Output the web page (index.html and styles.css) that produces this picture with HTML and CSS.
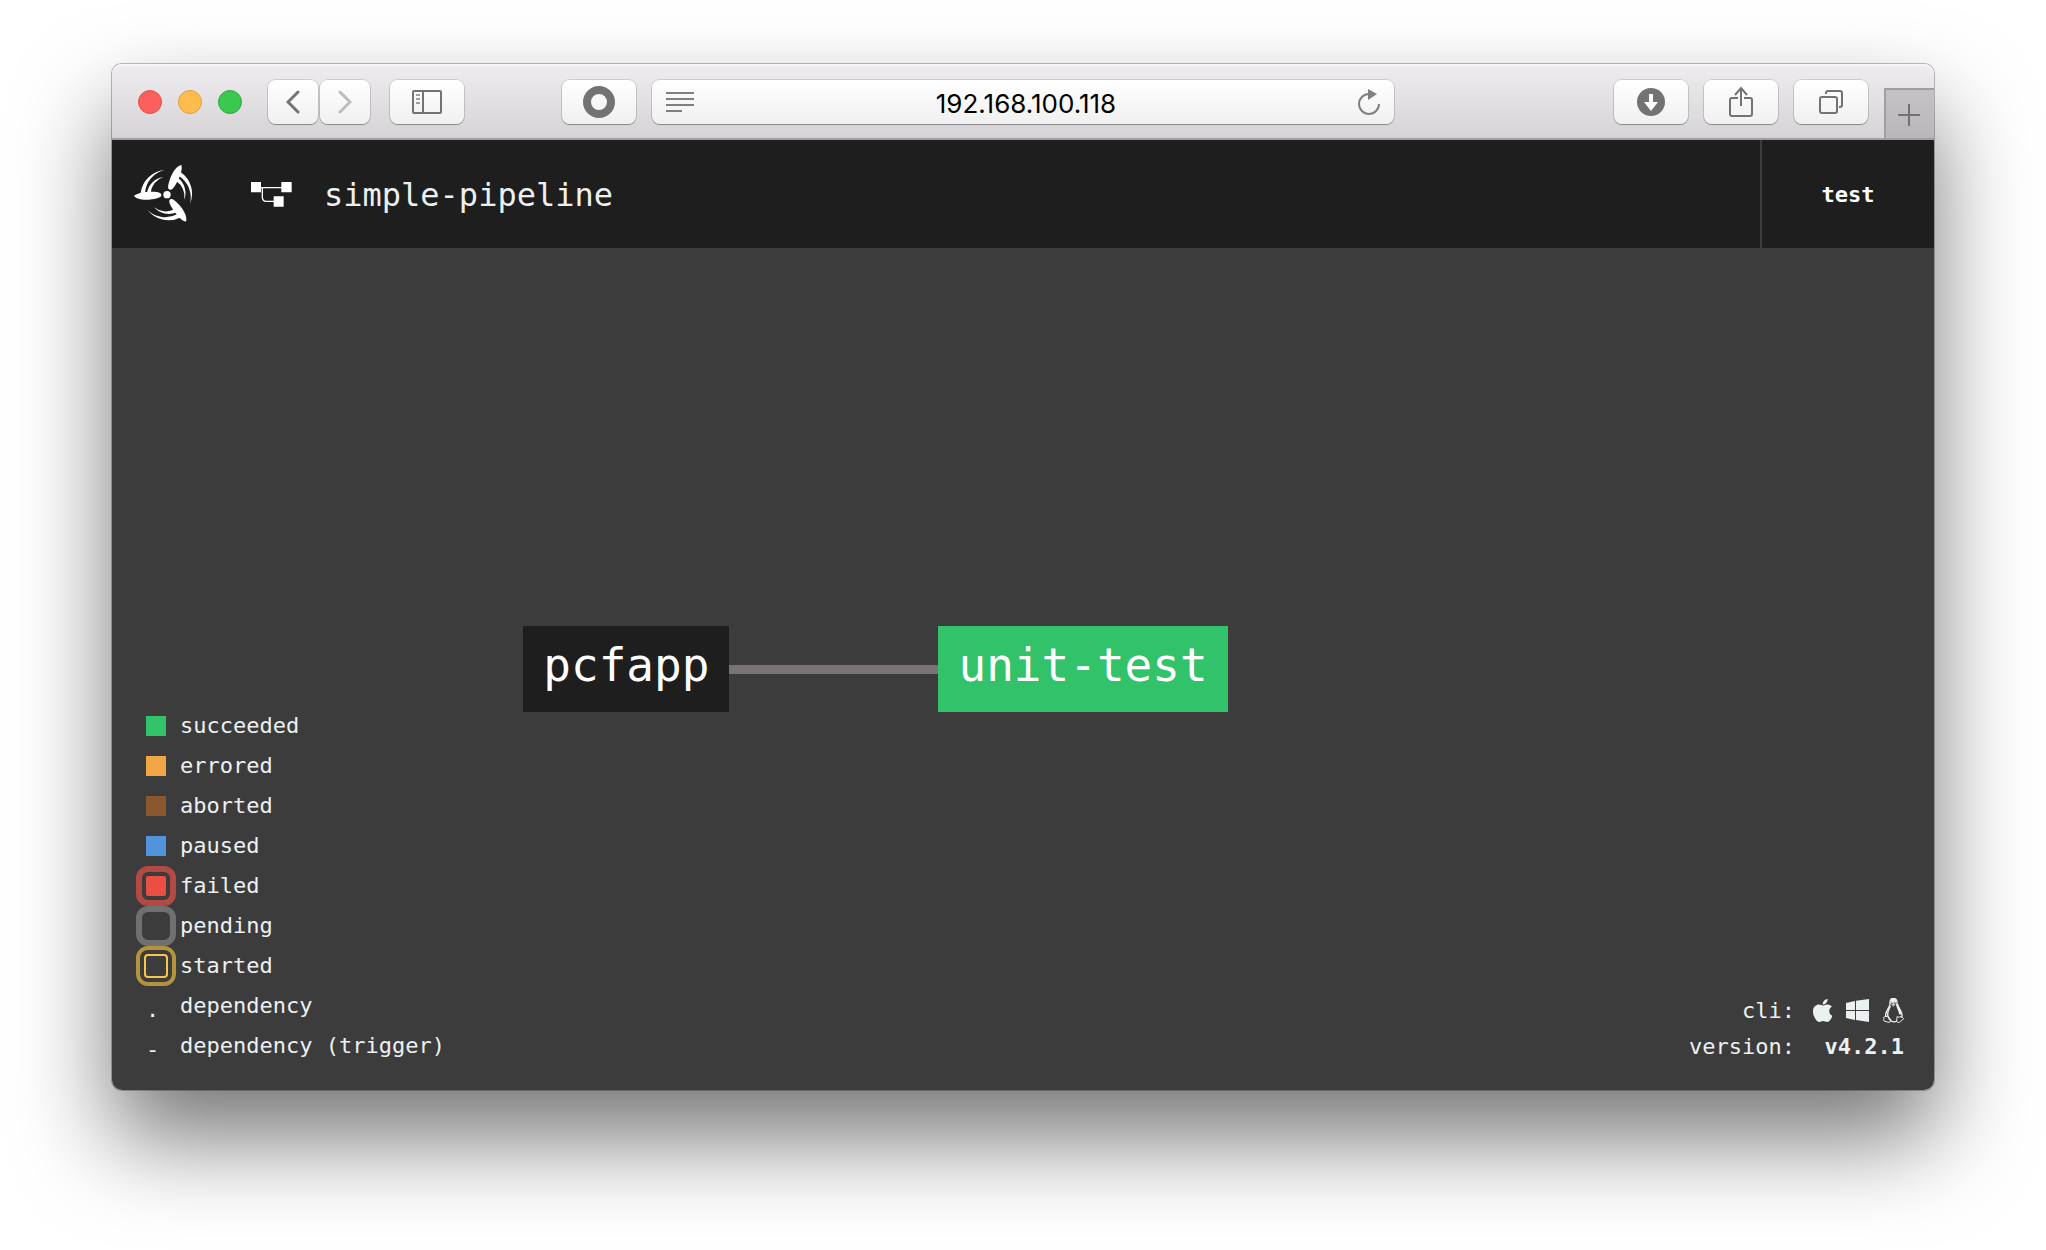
FILE: index.html
```html
<!DOCTYPE html>
<html lang="en">
<head>
<meta charset="utf-8">
<title>simple-pipeline</title>
<link rel="stylesheet" href="styles.css">
</head>
<body>
<div class="window">
  <div class="toolbar">
    <div class="toolbar-side">
      <div class="lights">
        <button class="light light-close" aria-label="Close"></button>
        <button class="light light-minimize" aria-label="Minimize"></button>
        <button class="light light-zoom" aria-label="Zoom"></button>
      </div>
      <div class="history">
        <button class="tool tool-small" aria-label="Back"><svg width="14" height="24" viewBox="0 0 14 24"><path d="M12 2 2 12l10 10" fill="none" stroke="#737373" stroke-width="3" stroke-linecap="round"/></svg></button>
        <button class="tool tool-small" aria-label="Forward"><svg width="14" height="24" viewBox="0 0 14 24"><path d="M2 2l10 10L2 22" fill="none" stroke="#bdbdbd" stroke-width="3" stroke-linecap="round"/></svg></button>
      </div>
      <button class="tool" aria-label="Show sidebar"><svg width="30" height="24" viewBox="0 0 30 24"><g fill="none" stroke="#737373" stroke-width="2"><rect x="1" y="1" width="28" height="22" rx="1"/><path d="M11 1v22"/><path d="M4 5h4M4 9h4M4 13h4" stroke="#a0a0a0"/></g></svg></button>
      <button class="tool tool-end" aria-label="Extension"><svg width="32" height="32" viewBox="0 0 32 32"><circle cx="16" cy="16" r="12" fill="none" stroke="#737373" stroke-width="8"/></svg></button>
    </div>
    <div class="address">
      <svg width="28" height="20" viewBox="0 0 28 20"><path d="M0 1h28M0 7h28M0 13h28M0 19h16" stroke="#808080" stroke-width="2"/></svg>
      <input class="address-input" type="text" aria-label="Address" value="192.168.100.118">
      <button class="reload" aria-label="Reload"><svg width="22" height="26" viewBox="0 0 22 26"><path d="M11 5a10 10 0 1 0 10 10" fill="none" stroke="#808080" stroke-width="2"/><path d="M10 0v11l9-6z" fill="#808080"/></svg></button>
    </div>
    <div class="toolbar-side toolbar-right">
      <button class="tool" aria-label="Downloads"><svg width="28" height="28" viewBox="0 0 28 28"><circle cx="14" cy="14" r="14" fill="#737373"/><path d="M12 6h4v8h5l-7 9-7-9h5z" fill="#fff"/></svg></button>
      <button class="tool" aria-label="Share"><svg width="24" height="32" viewBox="0 0 24 32"><path d="M9 12H3q-2 0-2 2v14q0 2 2 2h18q2 0 2-2V14q0-2-2-2h-6M12 20V3M6 9l6-7 6 7" fill="none" stroke="#737373" stroke-width="2"/></svg></button>
      <button class="tool" aria-label="Show all tabs"><svg width="24" height="24" viewBox="0 0 24 24"><g fill="none" stroke="#737373" stroke-width="2"><rect x="1" y="7" width="17" height="16" rx="2"/><path d="M7 4V3q0-2 2-2h12q2 0 2 2v12q0 2-2 2h-1"/></g></svg></button>
      <button class="new-tab" aria-label="New tab"><svg width="22" height="22" viewBox="0 0 22 22"><path d="M11 0v22M0 11h22" stroke="#737176" stroke-width="2"/></svg></button>
    </div>
  </div>

  <header class="header">
    <a class="logo" href="#" aria-label="Home">
      <svg width="60" height="60" viewBox="42 42 180 180" fill="#fff">
        <defs>
          <g id="blade">
            <path d="M42 138C50 129 72 125 96 125 118 125 124 129 124 135S116 145 96 148C72 152 50 148 42 138z"/>
            <path d="M62 129A79 79 0 0 1 134 60 76 76 0 0 0 75 129z"/>
            <path d="M81 129A58 58 0 0 1 130 81 56 56 0 0 0 92 129z"/>
          </g>
        </defs>
        <circle cx="141" cy="134" r="11"/>
        <use href="#blade"/>
        <use href="#blade" transform="rotate(118 141 134)"/>
        <use href="#blade" transform="rotate(237 141 134)"/>
      </svg>
    </a>
    <a class="pipeline" href="#">
      <svg width="41" height="25" viewBox="393 103 123 75"><path d="M393 103h30v31h-30zM484 103h31v31h-31zM461 146h30v31h-30z" fill="#fff"/><path d="M420 120h66M427 120v28q0 13 12 13h24" fill="none" stroke="#fff" stroke-width="4"/></svg>
      <span>simple-pipeline</span>
    </a>
    <a class="team" href="#">test</a>
  </header>

  <main class="canvas">
    <div class="graph">
      <a class="node" href="#">pcfapp</a>
      <span class="edge"></span>
      <a class="node node-succeeded" href="#">unit-test</a>
    </div>

    <ul class="legend">
      <li><span class="key"><i class="swatch succeeded"></i></span>succeeded</li>
      <li><span class="key"><i class="swatch errored"></i></span>errored</li>
      <li><span class="key"><i class="swatch aborted"></i></span>aborted</li>
      <li><span class="key"><i class="swatch paused"></i></span>paused</li>
      <li><span class="key ring ring-failed"><i class="swatch failed"></i></span>failed</li>
      <li><span class="key ring ring-pending"></span>pending</li>
      <li><span class="key ring ring-started"><i class="swatch started"></i></span>started</li>
      <li><span class="key mark">.</span>dependency</li>
      <li><span class="key mark">-</span>dependency (trigger)</li>
    </ul>

    <dl class="info">
      <dt>cli:</dt>
      <dd class="downloads">
        <a href="#" aria-label="macOS"><svg width="19" height="23" viewBox="4 32 367 448" preserveAspectRatio="none"><path fill="#ecf0f1" d="M318.700 268.700c-.2-36.700 16.400-64.400 50-84.800-18.800-26.900-47.200-41.700-84.700-44.600-35.500-2.800-74.300 20.700-88.500 20.700-15 0-49.400-19.700-76.400-19.700C63.300 141.200 4 184.800 4 273.500q0 39.300 14.400 81.200c12.800 36.700 59 126.700 107.200 125.200 25.200-.6 43-17.900 75.800-17.900 31.800 0 48.300 17.900 76.400 17.900 48.600-.7 90.400-82.500 102.600-119.300-65.200-30.700-61.700-90-61.700-91.900zm-56.600-164.200c27.300-32.400 24.800-61.900 24-72.500-24.100 1.400-52 16.400-67.900 34.900-17.500 19.800-27.800 44.300-25.600 71.900 26.100 2 49.900-11.400 69.500-34.300z"/></svg></a>
        <a href="#" aria-label="Windows"><svg width="23" height="23" viewBox="0 0 23 23"><path fill="#ecf0f1" d="M0 4l9-2v9H0zM10 1.800L23 0v11H10zM0 12h9v9l-9-2zM10 12h13v11l-13-2z"/></svg></a>
        <a href="#" aria-label="Linux"><svg width="21" height="25" viewBox="0 0 63 75" fill="none" stroke="#ecf0f1" stroke-width="4">
          <path d="M21 18C20 7 24 1 31 1s11 6 11 15c0 8 13 20 15 33 1 5-1 8-4 9M21 18c0 8-11 19-13 31-1 4 0 6 3 8"/>
          <path d="M42 18c1 10 9 18 10 31" stroke-width="7"/>
          <path d="M22 24c-3 9-7 12-8 23 0 8 3 16 10 22q9 5 18 0"/>
          <path d="M22 8q2-7 9-7t9 7l-3 9-7-3-7 3zM24 20l7-4 7 4-7 6z" fill="#ecf0f1" stroke="none"/>
          <path d="M26 11l1 3M35 11v3M25 20l6 3 6-3" stroke="#3d3c3c" stroke-width="2"/>
          <path d="M11 54c-3 2-7 1-9 4 1 4-1 8 1 11 6 1 10 4 15 4 5-1 7-5 5-9-4-4-7-10-12-10zM43 55c-2 5-2 10-2 15 3 5 9 4 12 0 3-3 7-4 9-8-4-2-4-6-7-8-3 4-9 5-12 1z" stroke-width="3"/>
        </svg></a>
      </dd>
      <dt>version:</dt>
      <dd class="version">v4.2.1</dd>
    </dl>
  </main>
</div>
</body>
</html>
```
FILE: styles.css
```css
* {
  box-sizing: border-box;
}

body {
  margin: 0;
  min-height: 100vh;
  padding: 64px 112px 160px;
  display: flex;
  background: #fff;
  color: #ecf0f1;
  font-family: "DejaVu Sans Mono", "Liberation Mono", monospace;
  font-size: 22px;
}

a {
  color: inherit;
  text-decoration: none;
}

svg {
  display: block;
}

button {
  padding: 0;
  border: 0;
  background: none;
}

.window {
  flex: 1;
  display: flex;
  flex-direction: column;
  border-radius: 10px;
  box-shadow: 0 0 0 1px rgba(0, 0, 0, 0.25), 0 48px 94px rgba(0, 0, 0, 0.54);
}

/* Browser toolbar */

.toolbar {
  display: grid;
  grid-template-columns: 1fr minmax(200px, 742px) 1fr;
  height: 76px;
  padding-top: 16px;
  border-bottom: 2px solid #a09ea1;
  border-radius: 10px 10px 0 0;
  background: linear-gradient(#efedf0, #d5d3d6);
  box-shadow: inset 0 2px 0 #f6f5f7;
}

.toolbar-side {
  display: flex;
  align-items: flex-start;
  padding: 0 16px 0 26px;
}

.toolbar-right {
  justify-content: flex-end;
  gap: 16px;
  padding: 0;
}

.lights {
  display: flex;
  gap: 16px;
  margin: 10px 26px 0 0;
}

.light {
  width: 24px;
  height: 24px;
  border: 1px solid #e0504d;
  border-radius: 50%;
  background: #fc605c;
}

.light-minimize {
  border-color: #dfa03c;
  background: #fdbc4e;
}

.light-zoom {
  border-color: #2eab3c;
  background: #3bc84e;
}

.history {
  display: flex;
  gap: 2px;
  margin-right: 20px;
}

.tool,
.address {
  height: 44px;
  border-radius: 8px;
  background: linear-gradient(#fff, #f0f0f0);
  box-shadow: 0 0 0 1px rgba(0, 0, 0, 0.12), 0 1px 1px rgba(0, 0, 0, 0.3);
}

.tool {
  display: flex;
  align-items: center;
  justify-content: center;
  width: 74px;
}

.tool-small {
  width: 50px;
}

.tool-end {
  margin-left: auto;
}

.address {
  display: flex;
  align-items: center;
  gap: 8px;
  padding: 0 14px;
}

.address-input {
  flex: 1;
  min-width: 0;
  padding: 4px 0 0;
  border: 0;
  background: none;
  color: #000;
  font: 26px/32px Inter, sans-serif;
  text-align: center;
}

.new-tab {
  display: flex;
  align-items: center;
  justify-content: center;
  width: 50px;
  height: 50px;
  margin-top: 8px;
  padding: 2px 2px 0 0;
  border-top: 2px solid #a09ea1;
  border-left: 2px solid #a09ea1;
  background: linear-gradient(#c4c2c5, #b9b7ba);
}

/* Page header */

.header {
  display: flex;
  align-items: stretch;
  height: 108px;
  background: #1e1e1e;
}

.logo {
  display: flex;
  align-items: center;
  padding: 0 57px 0 22px;
}

.pipeline {
  display: flex;
  align-items: center;
  gap: 32px;
  padding-top: 1px;
  font-size: 32px;
}

.team {
  display: flex;
  align-items: center;
  justify-content: center;
  width: 174px;
  margin-left: auto;
  border-left: 2px solid #3d3c3c;
  color: #fff;
  font-weight: bold;
}

/* Pipeline canvas */

.canvas {
  position: relative;
  flex: 1;
  display: flex;
  align-items: center;
  justify-content: center;
  padding-right: 295px;
  border-radius: 0 0 10px 10px;
  background: #3d3c3c;
}

.graph {
  display: flex;
  align-items: center;
}

.node {
  padding: 7px 20px 15px;
  background: #1e1e1e;
  color: #fff;
  font-size: 46px;
  line-height: 64px;
}

.node-succeeded {
  background: #32c26a;
}

.edge {
  width: 209px;
  height: 9px;
  background: #7a7373;
}

.legend {
  position: absolute;
  left: 24px;
  bottom: 24px;
  margin: 0;
  padding: 0;
  list-style: none;
}

.legend li {
  display: flex;
  align-items: center;
  gap: 4px;
  height: 40px;
  line-height: 42px;
}

.key {
  display: flex;
  align-items: center;
  justify-content: center;
  width: 40px;
  height: 40px;
}

.mark {
  justify-content: flex-start;
  padding: 8px 0 0 10px;
}

.swatch {
  width: 20px;
  height: 20px;
}

.succeeded {
  background: #32c26a;
}

.errored {
  background: #f2a545;
}

.aborted {
  background: #8b572f;
}

.paused {
  background: #5194dc;
}

.failed {
  border-radius: 2px;
  background: #ea4e43;
}

.started {
  width: 24px;
  height: 24px;
  border: 2px solid #f6c54a;
  border-radius: 4px;
}

.ring {
  border: 6px solid #b34943;
  border-radius: 12px;
}

.ring-pending {
  border-color: #707070;
}

.ring-started {
  border-width: 4px;
  border-color: #b3943d;
}

.info {
  position: absolute;
  right: 30px;
  bottom: 25px;
  display: grid;
  grid-template-columns: auto auto;
  column-gap: 18px;
  margin: 0;
  line-height: 36px;
  text-align: right;
}

.info dd {
  margin: 0;
}

.downloads {
  display: flex;
  align-items: center;
  justify-content: flex-end;
  gap: 14px;
  padding-bottom: 2px;
}

.version {
  font-weight: bold;
}
```
